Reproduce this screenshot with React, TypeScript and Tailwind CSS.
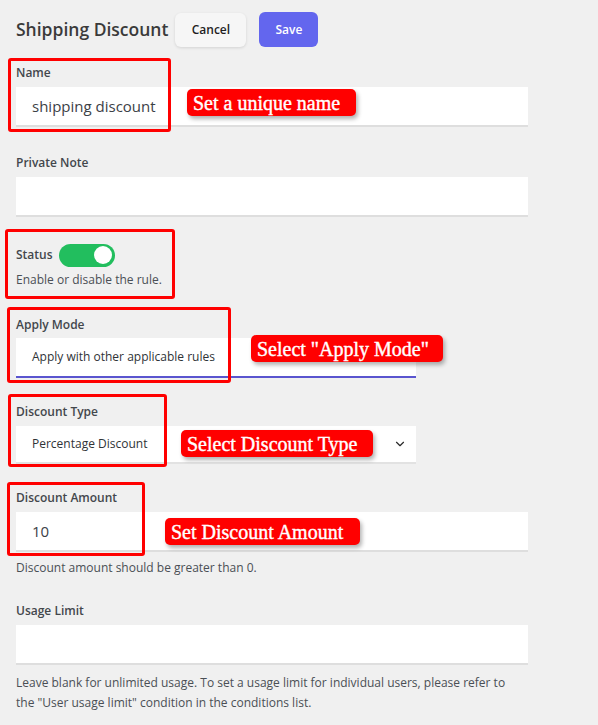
import { ChevronDown } from "lucide-react";

const font = "font-['Open_Sans','Noto_Sans',sans-serif]";

function Label({ children }: { children: React.ReactNode }) {
  return <div className="text-[12px] font-semibold leading-[18px] text-[#43474c]">{children}</div>;
}

function Help({ children }: { children: React.ReactNode }) {
  return <p className="text-[12px] leading-[18px] text-[#4a4f55]">{children}</p>;
}

function TextInput({ value }: { value?: string }) {
  return (
    <div className="mt-[5px] flex h-10 w-[512px] items-center border-b-2 border-[#dedede] bg-white px-4">
      {value && <span className="text-[15px] text-[#3c4146]">{value}</span>}
    </div>
  );
}

function Callout({ text, className }: { text: string; className: string }) {
  return (
    <div
      className={`absolute flex items-center rounded-[5px] bg-[#ff0000] pl-[6px] font-['Liberation_Serif','Times_New_Roman',serif] text-[20px] text-white [-webkit-text-stroke:0.4px_white] shadow-[2px_3px_4px_rgba(0,0,0,0.3)] ${className}`}
    >
      {text}
    </div>
  );
}

function Frame({ className }: { className: string }) {
  return <div className={`pointer-events-none absolute rounded-[3px] border-[3px] border-[#ff0000] ${className}`} />;
}

export default function App() {
  return (
    <div className={`relative min-h-[725px] w-full bg-[#f0f0f0] px-4 pt-3 pb-6 ${font}`}>
      <div className="flex h-[35px] items-center">
        <h1 className="text-[17.5px] font-semibold text-[#3a3a3a]">Shipping Discount</h1>
        <button className="ml-[7px] h-[34px] w-[71px] rounded-[6px] bg-[#f6f6f6] text-[12px] font-semibold text-[#1e1e1e] shadow-[0_1px_3px_rgba(0,0,0,0.12)]">
          Cancel
        </button>
        <button className="ml-[13px] h-[35px] w-[59px] rounded-[6px] bg-[#6366ee] text-[12px] font-semibold text-white">
          Save
        </button>
      </div>

      <div className="mt-[17px]">
        <Label>Name</Label>
        <TextInput value="shipping discount" />
      </div>

      <div className="mt-[27px]">
        <Label>Private Note</Label>
        <TextInput />
      </div>

      <div className="mt-[26px]">
        <div className="flex h-6 items-center gap-[6px]">
          <Label>Status</Label>
          <div className="flex h-[23px] w-14 items-center justify-end rounded-full bg-[#22be5e] pr-[3px]">
            <div className="h-[18px] w-[18px] rounded-full bg-white" />
          </div>
        </div>
        <div className="mt-[4px]">
          <Help>Enable or disable the rule.</Help>
        </div>
      </div>

      <div className="mt-[27px]">
        <Label>Apply Mode</Label>
        <div className="mt-[4px] flex h-10 w-[400px] items-center border-b-2 border-[#5a55cf] bg-white px-4">
          <span className="text-[12px] text-[#2f3337]">Apply with other applicable rules</span>
        </div>
      </div>

      <div className="mt-[25px]">
        <Label>Discount Type</Label>
        <div className="mt-[5px] flex h-[38px] w-[400px] items-center justify-between border-b-2 border-[#e2e2e2] bg-white pl-4 pr-[9px]">
          <span className="text-[12px] text-[#2f3337]">Percentage Discount</span>
          <ChevronDown size={14} strokeWidth={2} className="text-[#2a2a2a]" />
        </div>
      </div>

      <div className="mt-[25px]">
        <Label>Discount Amount</Label>
        <TextInput value="10" />
        <div className="mt-[7px]">
          <Help>Discount amount should be greater than 0.</Help>
        </div>
      </div>

      <div className="mt-[25px]">
        <Label>Usage Limit</Label>
        <TextInput />
        <p className="mt-[8px] w-[505px] text-[12px] leading-[20px] text-[#4a4f55]">
          Leave blank for unlimited usage. To set a usage limit for individual users, please refer to the "User usage
          limit" condition in the conditions list.
        </p>
      </div>

      <Frame className="left-[8px] top-[58px] h-[74px] w-[163px]" />
      <Frame className="left-[5px] top-[229px] h-[70px] w-[170px]" />
      <Frame className="left-[7px] top-[307px] h-[76px] w-[224px]" />
      <Frame className="left-[8px] top-[394px] h-[73px] w-[159px]" />
      <Frame className="left-[7px] top-[482px] h-[74px] w-[138px]" />

      <Callout text="Set a unique name" className="left-[187px] top-[89px] h-[27px] w-[169px]" />
      <Callout text='Select "Apply Mode"' className="left-[251px] top-[335px] h-[27px] w-[192px]" />
      <Callout text="Select Discount Type" className="left-[181px] top-[430px] h-[27px] w-[192px]" />
      <Callout text="Set Discount Amount" className="left-[165px] top-[518px] h-[27px] w-[195px]" />
    </div>
  );
}
